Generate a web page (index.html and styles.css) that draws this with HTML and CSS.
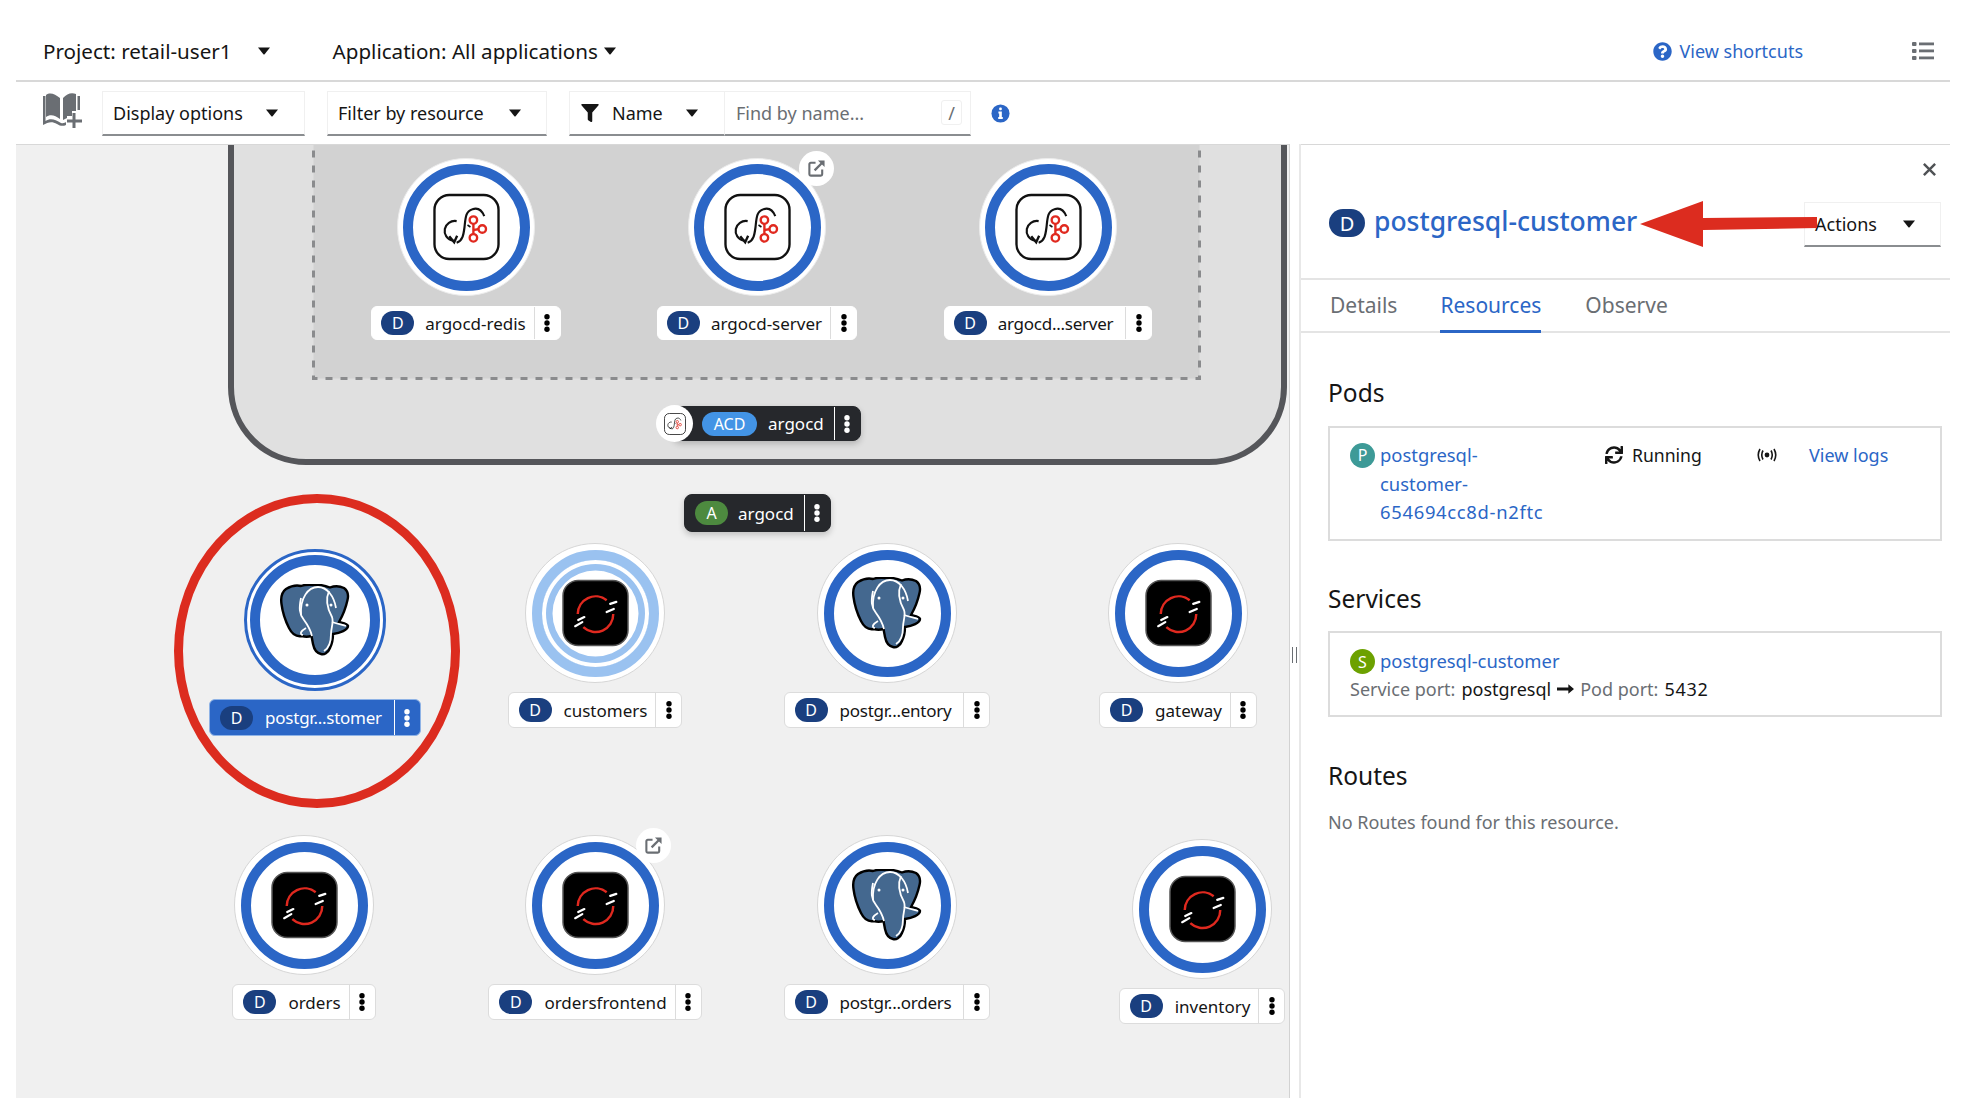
FILE: index.html
```html
<!DOCTYPE html>
<html>
<head>
    <title>Topology</title>
    <link rel="stylesheet" href="styles.css">
</head>
<body>
    <svg class="sprites" width="0" height="0">
        <symbol id="argo" viewBox="0 0 68 68">
            <rect x="1.500" y="1.500" width="65" height="65" rx="15" fill="#fff" stroke="#111" stroke-width="2.400"/>
            <path d="M21 48C14 47 11 41 12 36C13 31 18 27 24 28" fill="none" stroke="#111" stroke-width="2.200"/>
            <path d="M16.500 43.500L21.500 49.500L24.500 43" fill="none" stroke="#111" stroke-width="2.400"/>
            <path d="M24 50C30 48 31 42 32 34C33 25 33 18 40 16C46 14 50 18 52 23" fill="none" stroke="#111" stroke-width="2.200"/>
            <path d="M35 32L38 34" stroke="#111" stroke-width="1.600"/>
            <path d="M41 31V41M42 37L47 36" stroke="#e0291f" stroke-width="2.400"/>
            <circle cx="41" cy="27" r="3.800" fill="#fff" stroke="#e0291f" stroke-width="2.400"/>
            <circle cx="50" cy="36" r="3.800" fill="#fff" stroke="#e0291f" stroke-width="2.400"/>
            <circle cx="41" cy="45" r="3.800" fill="#fff" stroke="#e0291f" stroke-width="2.400"/>
        </symbol>
        <symbol id="pg" viewBox="0 0 70 72">
            <path d="M6 5C11 2 17 1 21 2C25 .5 30 .5 34 1C39 .5 45 1.500 50 3.500C55 1.500 60 2 64 4C68 7 68.500 12 67.500 16C66 23 63 31 59 38C62 39 67 39 68 42C68 46 60 49 53 50C53 55 52 60 50 64C48 69 44 71 41 70C36 69 34 65 33 60L31.500 52C28 53 25 53 22 52C17 53 12 50 9 44C5 36 2.500 28 1.500 20C.5 13 2 8 6 5Z" fill="#44688f" stroke="#000" stroke-width="2.400"/>
            <g fill="none" stroke="#fff" stroke-width="1.800">
                <path d="M21 31C20 14 28 3 38 3C47 3 54 12 56 24"/>
                <path d="M21 14C19 24 19 30 24 36C27 40 30 44 32 52"/>
                <path d="M49 7C45 16 47 24 52 33C54 38 51 44 51 50C51 58 49 64 44 67"/>
                <path d="M26 44C21 47 19 50 23 51"/>
                <path d="M52 38C58 40 63 41 66 42"/>
            </g>
            <circle cx="27" cy="21" r="1.500" fill="#fff"/>
            <circle cx="51" cy="21" r="1.500" fill="#fff"/>
        </symbol>
        <symbol id="os" viewBox="0 0 66 66">
            <rect x="1" y="1" width="64" height="64" rx="15" fill="#000" stroke="#555" stroke-width="1.500"/>
            <path d="M15.500 34A17.500 17.500 0 0 1 44 20.500M50.500 34A17.500 17.500 0 0 1 21 47" fill="none" stroke="#e0291f" stroke-width="2.400"/>
            <path d="M47.500 24L53.500 22M44 32L51 29M16 40L22 37M13 46L20 42" stroke="#fff" stroke-width="2.200" stroke-linecap="round"/>
        </symbol>
        <symbol id="ext" viewBox="0 0 20 20">
            <path d="M9 4H4A1.500 1.500 0 0 0 2.500 5.500V16A1.500 1.500 0 0 0 4 17.500H14.500A1.500 1.500 0 0 0 16 16V11" fill="none" stroke="#6a6e73" stroke-width="2.200"/>
            <path d="M8 12L16 4" stroke="#6a6e73" stroke-width="2.400"/>
            <path d="M11.500 1.500H18.500V8.500Z" fill="#6a6e73"/>
        </symbol>
        <symbol id="kebab" viewBox="0 0 6 18">
            <circle cx="3" cy="2.800" r="2.700"/>
            <circle cx="3" cy="9" r="2.700"/>
            <circle cx="3" cy="15.200" r="2.700"/>
        </symbol>
        <symbol id="caret" viewBox="0 0 12 8">
            <path d="M0 .5H12L6.600 7.200Q6 7.800 5.400 7.200Z"/>
        </symbol>
    </svg>

    <div class="page">
        <header class="masthead">
            <div class="mast-drop project">Project: retail-user1 <svg class="caret"><use href="#caret"/></svg></div>
            <div class="mast-drop application">Application: All applications <svg class="caret"><use href="#caret"/></svg></div>
            <a class="shortcuts">
                <svg class="help-icon" viewBox="0 0 512 512"><path d="M504 256c0 136.997-111.043 248-248 248S8 392.997 8 256C8 119.083 119.043 8 256 8s248 111.083 248 248zM262.655 90c-54.497 0-89.255 22.957-116.549 63.758-3.536 5.286-2.353 12.415 2.715 16.258l34.699 26.31c5.205 3.947 12.621 3.008 16.665-2.122 17.864-22.658 30.113-35.797 57.303-35.797 20.429 0 45.698 13.148 45.698 32.958 0 14.976-12.363 22.667-32.534 33.976C247.128 238.528 216 254.941 216 296v4c0 6.627 5.373 12 12 12h56c6.627 0 12-5.373 12-12v-1.333c0-28.462 83.186-29.647 83.186-106.667 0-58.002-60.165-102-116.531-102zM256 338c-25.365 0-46 20.635-46 46 0 25.364 20.635 46 46 46s46-20.636 46-46c0-25.365-20.635-46-46-46z"/></svg>
                View shortcuts
            </a>
            <svg class="list-icon" viewBox="0 0 22 18">
                <rect x="0" y="0" width="4.500" height="4" rx="1"/><rect x="7" y=".5" width="15" height="2.800"/>
                <rect x="0" y="7" width="4.500" height="4" rx="1"/><rect x="7" y="7.500" width="15" height="2.800"/>
                <rect x="0" y="14" width="4.500" height="4" rx="1"/><rect x="7" y="14.500" width="15" height="2.800"/>
            </svg>
        </header>

        <div class="toolbar">
            <svg class="book-icon" viewBox="0 0 40 36">
                <path d="M4 3C8 0 13 2 18 6V27C13 23 8 22 4 25Z"/>
                <path d="M21 6C25 2 29 0 34 2V19H30V24H25V26L21 28Z"/>
                <path d="M1 4H3.500V29C8 26 13 27 19 31C21 31.500 23 31 24 30V33C21 34.500 18 34 15 32C10 29 6 30 1 33Z"/>
                <path d="M35.500 4H38V18H35.500Z"/>
                <path d="M30.500 21H33.500V27.500H40V30.500H33.500V36H30.500V30.500H25V27.500H30.500Z"/>
            </svg>
            <div class="select select-display">Display options <svg class="caret"><use href="#caret"/></svg></div>
            <div class="select select-filter">Filter by resource <svg class="caret"><use href="#caret"/></svg></div>
            <div class="select select-name">
                <svg class="funnel" viewBox="0 0 20 22"><path d="M1 1H19Q20 1 19.500 2.500L12.500 10.500V20Q12.500 21.500 11 21L8 19Q7.500 18.500 7.500 18V10.500L.5 2.500Q0 1 1 1Z"/></svg>
                Name <svg class="caret"><use href="#caret"/></svg>
            </div>
            <div class="search">Find by name... <span class="slash">/</span></div>
            <svg class="info-icon" viewBox="0 0 20 20">
                <circle cx="10" cy="10" r="9.500" fill="#2b66c6"/>
                <rect x="8.600" y="3.800" width="2.800" height="2.800" rx="1" fill="#fff"/>
                <path d="M7.800 8H11.400V13.800H12.400V15.800H7.600V13.800H8.600V10H7.800Z" fill="#fff"/>
            </svg>
        </div>

        <main class="main">
            <section class="canvas">
                <div class="group"></div>
                <svg class="group-inner" viewBox="0 0 889 275"><rect x="1.500" y="1.500" width="886" height="272"/></svg>

                <div class="node node-redis">
                    <div class="ring"><div class="ring-in"><svg class="logo"><use href="#argo"/></svg></div></div>
                    <div class="tag tag-flat"><span class="badge">D</span><span class="tag-name">argocd-redis</span><span class="tag-menu"><svg class="kebab"><use href="#kebab"/></svg></span></div>
                </div>
                <div class="node node-server">
                    <div class="ring"><div class="ring-in"><svg class="logo"><use href="#argo"/></svg></div><span class="ext"><svg><use href="#ext"/></svg></span></div>
                    <div class="tag tag-flat"><span class="badge">D</span><span class="tag-name">argocd-server</span><span class="tag-menu"><svg class="kebab"><use href="#kebab"/></svg></span></div>
                </div>
                <div class="node node-repo">
                    <div class="ring"><div class="ring-in"><svg class="logo"><use href="#argo"/></svg></div></div>
                    <div class="tag tag-flat"><span class="badge">D</span><span class="tag-name tag-cut">argocd...server</span><span class="tag-menu"><svg class="kebab"><use href="#kebab"/></svg></span></div>
                </div>

                <div class="tag tag-dark tag-group">
                    <span class="mini-logo"><svg><use href="#argo"/></svg></span>
                    <span class="badge badge-acd">ACD</span><span class="tag-name">argocd</span><span class="tag-menu"><svg class="kebab"><use href="#kebab"/></svg></span>
                </div>
                <div class="tag tag-dark tag-app">
                    <span class="badge badge-app">A</span><span class="tag-name">argocd</span><span class="tag-menu"><svg class="kebab"><use href="#kebab"/></svg></span>
                </div>

                <div class="node node-pgcustomer node-selected">
                    <div class="ring"><div class="ring-in"><svg class="logo logo-pg"><use href="#pg"/></svg></div></div>
                    <div class="tag"><span class="badge">D</span><span class="tag-name tag-cut">postgr...stomer</span><span class="tag-menu"><svg class="kebab"><use href="#kebab"/></svg></span></div>
                </div>
                <div class="node node-customers node-pending">
                    <div class="ring"><div class="ring-in"><svg class="logo"><use href="#os"/></svg></div></div>
                    <div class="tag"><span class="badge">D</span><span class="tag-name">customers</span><span class="tag-menu"><svg class="kebab"><use href="#kebab"/></svg></span></div>
                </div>
                <div class="node node-pginventory">
                    <div class="ring"><div class="ring-in"><svg class="logo logo-pg"><use href="#pg"/></svg></div></div>
                    <div class="tag"><span class="badge">D</span><span class="tag-name tag-cut">postgr...entory</span><span class="tag-menu"><svg class="kebab"><use href="#kebab"/></svg></span></div>
                </div>
                <div class="node node-gateway">
                    <div class="ring"><div class="ring-in"><svg class="logo"><use href="#os"/></svg></div></div>
                    <div class="tag"><span class="badge">D</span><span class="tag-name">gateway</span><span class="tag-menu"><svg class="kebab"><use href="#kebab"/></svg></span></div>
                </div>
                <div class="node node-orders">
                    <div class="ring"><div class="ring-in"><svg class="logo"><use href="#os"/></svg></div></div>
                    <div class="tag"><span class="badge">D</span><span class="tag-name">orders</span><span class="tag-menu"><svg class="kebab"><use href="#kebab"/></svg></span></div>
                </div>
                <div class="node node-frontend">
                    <div class="ring"><div class="ring-in"><svg class="logo"><use href="#os"/></svg></div><span class="ext"><svg><use href="#ext"/></svg></span></div>
                    <div class="tag"><span class="badge">D</span><span class="tag-name">ordersfrontend</span><span class="tag-menu"><svg class="kebab"><use href="#kebab"/></svg></span></div>
                </div>
                <div class="node node-pgorders">
                    <div class="ring"><div class="ring-in"><svg class="logo logo-pg"><use href="#pg"/></svg></div></div>
                    <div class="tag"><span class="badge">D</span><span class="tag-name tag-cut">postgr...orders</span><span class="tag-menu"><svg class="kebab"><use href="#kebab"/></svg></span></div>
                </div>
                <div class="node node-inventory">
                    <div class="ring"><div class="ring-in"><svg class="logo"><use href="#os"/></svg></div></div>
                    <div class="tag"><span class="badge">D</span><span class="tag-name">inventory</span><span class="tag-menu"><svg class="kebab"><use href="#kebab"/></svg></span></div>
                </div>

                <div class="red-circle"></div>
            </section>

            <div class="splitter"><span class="grip"></span></div>

            <aside class="panel">
                <div class="panel-head">
                    <svg class="close" viewBox="0 0 16 16"><path d="M2 2L14 14M14 2L2 14" stroke="#4f5255" stroke-width="2.600"/></svg>
                    <div class="title-row">
                        <span class="badge badge-title">D</span>
                        <a class="title">postgresql-customer</a>
                        <div class="select select-actions">Actions <svg class="caret"><use href="#caret"/></svg></div>
                    </div>
                </div>
                <nav class="tabs">
                    <span class="tab">Details</span>
                    <span class="tab tab-active">Resources</span>
                    <span class="tab">Observe</span>
                </nav>
                <div class="panel-body">
                    <h2>Pods</h2>
                    <div class="box pod-box">
                        <div class="pod-name"><span class="res-badge res-pod">P</span><a class="pod-link">postgresql-customer-<span class="pod-id">654694cc8d-n2ftc</span></a></div>
                        <div class="pod-status">
                            <svg class="sync" viewBox="0 0 512 512"><path d="M440.65 12.57l4 82.77A247.16 247.16 0 0 0 255.83 8C134.73 8 33.91 94.92 12.29 209.82A12 12 0 0 0 24.09 224h49.05a12 12 0 0 0 11.67-9.26 175.91 175.91 0 0 1 317-56.94l-101.46-4.86a12 12 0 0 0-12.57 12v47.41a12 12 0 0 0 12 12H500a12 12 0 0 0 12-12V12a12 12 0 0 0-12-12h-47.37a12 12 0 0 0-11.98 12.57zM255.83 432a175.61 175.61 0 0 1-146-77.8l101.8 4.87a12 12 0 0 0 12.57-12v-47.4a12 12 0 0 0-12-12H12a12 12 0 0 0-12 12V500a12 12 0 0 0 12 12h47.35a12 12 0 0 0 12-12.6l-4.15-82.57A247.17 247.17 0 0 0 255.83 504c121.11 0 221.93-86.92 243.55-201.82a12 12 0 0 0-11.8-14.18h-49.05a12 12 0 0 0-11.67 9.26A175.86 175.86 0 0 1 255.83 432z"/></svg>
                            Running
                        </div>
                        <svg class="signal" viewBox="0 0 20 14">
                            <circle cx="10" cy="7" r="2.400"/>
                            <path d="M6 2.500Q3.500 7 6 11.500M14 2.500Q16.500 7 14 11.500M3 1Q-.5 7 3 13M17 1Q20.500 7 17 13" fill="none" stroke="#151515" stroke-width="1.600"/>
                        </svg>
                        <a class="logs">View logs</a>
                    </div>

                    <h2 class="h-services">Services</h2>
                    <div class="box service-box">
                        <div class="service-name"><span class="res-badge res-svc">S</span><a class="pod-link">postgresql-customer</a></div>
                        <div class="service-port">
                            <span class="muted">Service port:</span> postgresql
                            <svg class="long-arrow" viewBox="0 0 18 10"><path d="M0 3.500H12V0L18 5L12 10V6.500H0Z"/></svg>
                            <span class="muted">Pod port:</span> <span class="port-num">5432</span>
                        </div>
                    </div>

                    <h2 class="h-routes">Routes</h2>
                    <p class="no-routes">No Routes found for this resource.</p>
                </div>

                <svg class="red-arrow" viewBox="0 0 180 46"><path d="M0 23L63 0V17L177 16V27L63 29V46Z"/></svg>
            </aside>
        </main>
    </div>
</body>
</html>
```

FILE: styles.css
```css
* {
    box-sizing: border-box;
}
html, body {
    margin: 0;
    background: #fff;
}
body {
    font-family: "Noto Sans", sans-serif;
    font-size: 18px;
    color: #151515;
}
.sprites {
    position: absolute;
}
svg {
    display: block;
}
.page {
    width: 1976px;
    height: 1116px;
    padding: 0 26px 18px 16px;
    display: flex;
    flex-direction: column;
}

/* top bar */
.masthead {
    height: 82px;
    flex: none;
    padding: 22px 16px 0 27px;
    display: flex;
    align-items: center;
    border-bottom: 2px solid #d8d8d8;
    font-size: 20.600px;
}
.mast-drop {
    display: flex;
    align-items: center;
}
.caret {
    width: 12px;
    height: 8px;
    fill: #151515;
}
.project .caret {
    margin-left: 26px;
}
.application {
    margin-left: 63px;
}
.application .caret {
    margin-left: 6px;
}
.shortcuts {
    margin-left: auto;
    display: flex;
    align-items: center;
    gap: 7px;
    color: #2b66c6;
    font-size: 18px;
}
.help-icon {
    width: 19px;
    height: 19px;
    fill: #2b66c6;
}
.list-icon {
    width: 22px;
    height: 18px;
    margin-left: 109px;
    fill: #6a6e73;
}

/* toolbar */
.toolbar {
    height: 62px;
    flex: none;
    padding-left: 26px;
    display: flex;
    align-items: center;
}
.book-icon {
    width: 40px;
    height: 36px;
    margin-bottom: 6px;
    fill: #6a6e73;
}
.select {
    height: 45px;
    display: flex;
    align-items: center;
    justify-content: space-between;
    padding: 0 12px;
    border: 1px solid #f0f0f0;
    border-bottom: 2px solid #8a8d90;
}
.select-display {
    width: 203px;
    margin-left: 20px;
    padding: 0 26px 0 10px;
}
.select-filter {
    width: 220px;
    margin-left: 22px;
    padding: 0 25px 0 10px;
}
.select-name {
    width: 156px;
    margin-left: 22px;
    padding: 0 26px 0 11px;
    justify-content: flex-start;
}
.select-name .caret {
    margin-left: auto;
}
.funnel {
    width: 18px;
    height: 20px;
    margin-right: 13px;
    fill: #151515;
}
.search {
    width: 246px;
    height: 45px;
    padding: 0 8px 0 11px;
    display: flex;
    align-items: center;
    justify-content: space-between;
    color: #6a6e73;
    border: 1px solid #f0f0f0;
    border-left: 0;
    border-bottom: 2px solid #8a8d90;
}
.slash {
    width: 21px;
    height: 25px;
    text-align: center;
    line-height: 24px;
    border: 1px solid #f0f0f0;
    border-radius: 3px;
}
.info-icon {
    width: 19px;
    height: 19px;
    margin-left: 20px;
}

.main {
    flex: 1;
    display: flex;
    min-height: 0;
}

/* topology canvas */
.canvas {
    width: 1273px;
    position: relative;
    overflow: hidden;
    background: #f0f0f0;
    border-top: 1px solid #d8d8d8;
}
.group {
    position: absolute;
    left: 212px;
    top: -40px;
    width: 1059px;
    height: 360px;
    background: #e0e0e0;
    border: 6px solid #55565a;
    border-radius: 0 0 78px 78px;
}
.group-inner {
    position: absolute;
    left: 296px;
    top: -40px;
    width: 889px;
    height: 275px;
}
.group-inner rect {
    fill: #d2d2d2;
    stroke: #8a8b8d;
    stroke-width: 3;
    stroke-dasharray: 7 8;
}
.node {
    position: absolute;
    width: 240px;
    display: flex;
    flex-direction: column;
    align-items: center;
}
.node-redis { left: 330px; top: 13px; }
.node-server { left: 621px; top: 13px; }
.node-repo { left: 912px; top: 13px; }
.node-pgcustomer { left: 179px; top: 404px; }
.node-customers { left: 459px; top: 398px; }
.node-pginventory { left: 751px; top: 398px; }
.node-gateway { left: 1042px; top: 398px; }
.node-orders { left: 168px; top: 690px; }
.node-frontend { left: 459px; top: 690px; }
.node-pgorders { left: 751px; top: 690px; }
.node-inventory { left: 1066px; top: 694px; }

.ring {
    position: relative;
    width: 140px;
    height: 140px;
    padding: 5.500px;
    background: #fff;
    border: 1px solid #d6d6d6;
    border-radius: 50%;
}
.ring-in {
    width: 100%;
    height: 100%;
    display: flex;
    align-items: center;
    justify-content: center;
    border: 10.500px solid #2b66c6;
    border-radius: 50%;
}
.logo {
    width: 67px;
    height: 68px;
}
.logo-pg {
    width: 70px;
    height: 72px;
}
.ext {
    position: absolute;
    left: 110px;
    top: -8px;
    width: 35px;
    height: 35px;
    display: flex;
    align-items: center;
    justify-content: center;
    background: #fff;
    border-radius: 50%;
}
.ext svg {
    width: 19px;
    height: 19px;
}
.node-redis .ring, .node-server .ring, .node-repo .ring {
    width: 138px;
    height: 138px;
    padding: 4.500px;
    border-color: #ececec;
}
.node-selected .ring {
    width: 142px;
    height: 142px;
    padding: 3px;
    border: 3px solid #2b66c6;
}
.node-pending .ring-in {
    border-color: #9ac2f0;
    box-shadow: inset 0 0 0 4px #fff, inset 0 0 0 10.5px #9ac2f0;
}

.tag {
    margin-top: 9px;
    height: 36px;
    display: flex;
    align-items: center;
    padding-left: 10px;
    background: #fff;
    border: 1px solid #dcdcdc;
    border-radius: 6px;
    font-size: 17px;
    white-space: nowrap;
}
.tag-flat {
    height: 34px;
    margin-top: 10px;
    padding-left: 9px;
    border-color: #fff;
}
.badge {
    width: 33px;
    height: 24px;
    flex: none;
    display: flex;
    align-items: center;
    justify-content: center;
    border-radius: 12px;
    background: #1a3f7f;
    color: #fff;
    font-size: 16px;
}
.tag-name {
    margin-left: 12px;
    margin-right: 8px;
}
.tag-flat .tag-name {
    margin-left: 11px;
}
.tag-name.tag-cut {
    letter-spacing: -0.250px;
    margin-right: 12px;
}
.tag-menu {
    width: 26px;
    height: 100%;
    display: flex;
    align-items: center;
    justify-content: center;
    border-left: 1px solid #dcdcdc;
}
.kebab {
    width: 6px;
    height: 18px;
    fill: #000;
}
.node-selected .tag {
    height: 37px;
    margin-top: 8px;
    background: #2b66c6;
    border-color: #8fb3e6;
    color: #fff;
}
.node-selected .tag-menu {
    border-left-color: #fff;
}
.node-selected .kebab {
    fill: #fff;
}
.tag-dark {
    position: absolute;
    margin: 0;
    background: #26282c;
    border-color: #26282c;
    border-radius: 8px;
    color: #fff;
    box-shadow: 0 3px 6px rgba(0, 0, 0, 0.2);
}
.tag-dark .tag-menu {
    border-left-color: #fff;
}
.tag-dark .kebab {
    fill: #fff;
}
.tag-group {
    left: 657px;
    top: 261px;
    height: 35px;
    padding-left: 28px;
}
.tag-group .tag-name {
    margin-left: 11px;
    margin-right: 10px;
}
.tag-app {
    left: 668px;
    top: 349px;
    height: 38px;
}
.tag-app .tag-name {
    margin-left: 10px;
    margin-right: 10px;
}
.badge-acd {
    width: 55px;
    background: #4394e5;
}
.badge-app {
    background: #4d8a3f;
}
.mini-logo {
    position: absolute;
    left: -18px;
    top: -2px;
    width: 37px;
    height: 37px;
    display: flex;
    align-items: center;
    justify-content: center;
    background: #fff;
    border-radius: 50%;
}
.mini-logo svg {
    width: 22px;
    height: 22px;
}
.red-circle {
    position: absolute;
    left: 158px;
    top: 349px;
    width: 286px;
    height: 314px;
    border: 9px solid #dc2c1f;
    border-radius: 50%;
}

.splitter {
    width: 12px;
    display: flex;
    align-items: center;
    justify-content: center;
    padding-top: 68px;
    border-left: 1px solid #d2d2d2;
    border-right: 2px solid #e8e8e8;
    background: #fff;
}
.grip {
    width: 5px;
    height: 16px;
    border-left: 1px solid #6a6e73;
    border-right: 1px solid #6a6e73;
}

/* side panel */
.panel {
    flex: 1;
    position: relative;
    min-width: 0;
}
.panel-head {
    height: 136px;
    padding: 17px 9px 0 28px;
    border-top: 1px solid #d8d8d8;
    border-bottom: 2px solid #e4e4e4;
}
.close {
    width: 15px;
    height: 15px;
    margin-left: auto;
    margin-right: 4px;
}
.title-row {
    margin-top: 25px;
    height: 45px;
    display: flex;
    align-items: center;
}
.badge-title {
    width: 36px;
    height: 28px;
    border-radius: 14px;
    font-size: 20px;
    margin-top: -3px;
}
.title {
    margin-left: 9px;
    margin-top: -7px;
    font-size: 26.500px;
    font-weight: 500;
    color: #2b66c6;
}
.select-actions {
    width: 137px;
    margin-left: auto;
    padding: 0 25px 0 10px;
}
.tabs {
    height: 53px;
    padding-left: 29px;
    display: flex;
    gap: 43px;
    border-bottom: 2px solid #e4e4e4;
    font-size: 21px;
    color: #6a6e73;
}
.tab {
    height: 53px;
    line-height: 50px;
}
.tab-active {
    margin-right: 1px;
    color: #2b66c6;
    border-bottom: 3px solid #2b66c6;
}
.panel-body {
    padding: 44px 8px 0 27px;
}
h2 {
    margin: 0 0 17px;
    font-size: 24.500px;
    font-weight: 400;
    line-height: 32px;
}
.box {
    border: 2px solid #dcdcdc;
    line-height: 28.500px;
}
.pod-box {
    height: 115px;
    padding: 13px 0 0 20px;
    display: flex;
    align-items: flex-start;
}
.pod-name {
    width: 255px;
    display: flex;
    align-items: flex-start;
}
.res-badge {
    width: 25px;
    height: 25px;
    flex: none;
    margin-top: 2px;
    display: flex;
    align-items: center;
    justify-content: center;
    border-radius: 50%;
    color: #fff;
    font-size: 16px;
}
.res-pod {
    background: #3d9a97;
}
.res-svc {
    background: #6ca100;
}
.pod-link {
    width: 176px;
    margin-left: 5px;
    font-size: 18.400px;
    color: #2b66c6;
}
.pod-id {
    letter-spacing: 0.700px;
}
.pod-status {
    width: 152px;
    display: flex;
    align-items: center;
    gap: 9px;
    font-size: 17.600px;
}
.sync {
    width: 18px;
    height: 18px;
    fill: #151515;
}
.signal {
    width: 20px;
    height: 14px;
    margin-top: 7px;
    fill: #151515;
}
.logs {
    margin-left: 32px;
    color: #2b66c6;
}
h2.h-services {
    margin: 42px 0 16px;
}
.service-box {
    height: 86px;
    padding: 14px 0 0 20px;
    line-height: 28px;
}
.service-name {
    display: flex;
}
.service-name .pod-link {
    width: auto;
}
.service-port {
    display: flex;
    align-items: center;
    gap: 6px;
}
.port-num {
    letter-spacing: 0.700px;
}
.muted {
    color: #6a6e73;
}
.long-arrow {
    width: 17px;
    height: 10px;
    fill: #151515;
}
h2.h-routes {
    margin: 43px 0 16px;
}
.no-routes {
    margin: 0;
    line-height: 28px;
    color: #6a6e73;
}
.red-arrow {
    position: absolute;
    left: 339px;
    top: 57px;
    width: 180px;
    height: 46px;
    fill: #dc2c1f;
}
```
